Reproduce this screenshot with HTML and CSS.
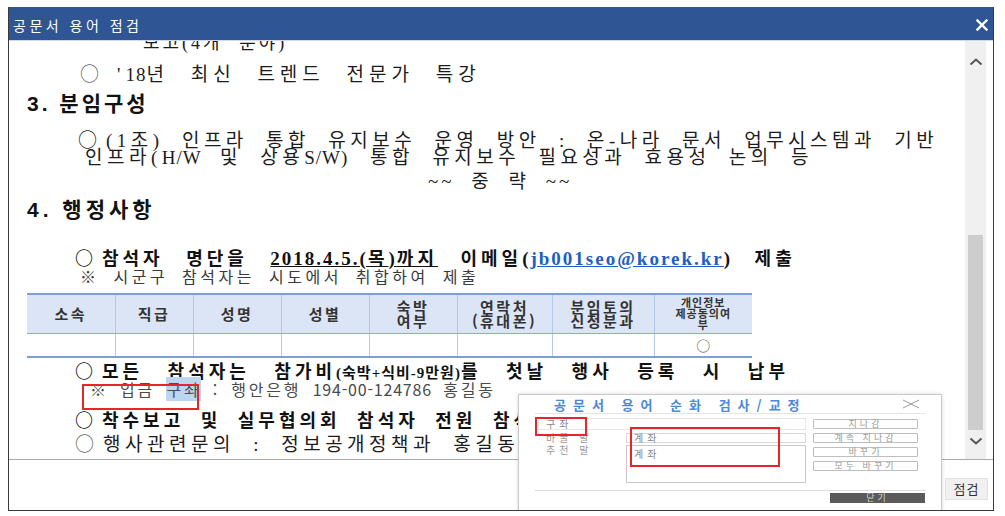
FILE: index.html
```html
<!DOCTYPE html>
<html lang="ko">
<head>
<meta charset="utf-8">
<title>공문서 용어 점검</title>
<link rel="stylesheet" href="styles.css">
</head>
<body>
<div class="win">
  <div class="titlebar">
    <span class="title">공문서 용어 점검</span>
    <svg class="close" width="12" height="12" viewBox="0 0 12 12"><path d="M1.5 1.5L10.5 10.5M10.5 1.5L1.5 10.5" stroke="#fff" stroke-width="2.4" stroke-linecap="square"/></svg>
  </div>
  <div class="view">
    <div class="doc">
      <div class="ln sr l0">보고(4개 분야)</div>
      <div class="ln sr l1"><span class="c lt o1">○</span>'<span class="la">18</span>년 최신 트렌드 전문가 특강</div>
      <div class="ln h">3. 분임구성</div>
      <div class="ln sr p3"><span class="c o2">○</span>(1조) 인프라 통합 유지보수 운영 방안 : 온-나라 문서 업무시스템과 기반<br>인프라(<span class="la">H/W</span> 및 상용<span class="la">S/W</span>) 통합 유지보수 필요성과 효용성 논의 등</div>
      <div class="ln sr l5">~~ 중 략 ~~</div>
      <div class="ln h h4">4. 행정사항</div>
      <div class="ln sr b l7"><span class="c o2">○</span>참석자 명단을 <u><span class="la">2018.4.5.(</span>목<span class="la">)</span>까지</u> 이메일<span class="la">(<a class="mail">jb001seo@korek.kr</a>)</span> 제출</div>
      <div class="note l8">※ 시군구 참석자는 시도에서 취합하여 제출</div>
      <table class="tbl">
        <colgroup>
          <col class="w88"><col class="w78"><col class="w88"><col class="w88"><col class="w88"><col class="w95"><col class="w102"><col class="w98">
        </colgroup>
        <tr>
          <th>소속</th><th>직급</th><th>성명</th><th>성별</th><th>숙박<br>여부</th><th>연락처<br>(휴대폰)</th><th>분임토의<br>신청분과</th><th class="th-s">개인정보<br>제공동의여<br>부</th>
        </tr>
        <tr>
          <td></td><td></td><td></td><td></td><td></td><td></td><td></td><td class="o">○</td>
        </tr>
      </table>
      <div class="ln sr b l9"><span class="c o2">○</span>모든 참석자는 참가비<span class="sm">(숙박+식비-9만원)</span>를 첫날 행사 등록 시 납부</div>
      <div class="note l10">※ 입금 <span class="sel">구좌</span> : 행안은행 <span class="dg">194-00-124786</span> 홍길동<span class="redbox rb0"></span></div>
      <div class="ln sr b l11"><span class="c o2">○</span>착수보고 및 실무협의회 참석자 전원 참석</div>
      <div class="ln sr l12"><span class="c lt o2">○</span>행사관련문의 : 정보공개정책과 홍길동 주무관</div>
    </div>
    <div class="sb">
      <svg class="chev up" width="14" height="8" viewBox="0 0 14 8"><path d="M1.5 6.5L7 1.5L12.5 6.5" fill="none" stroke="#555" stroke-width="2"/></svg>
      <div class="thumb"></div>
      <svg class="chev down" width="14" height="8" viewBox="0 0 14 8"><path d="M1.5 1.5L7 6.5L12.5 1.5" fill="none" stroke="#555" stroke-width="2"/></svg>
    </div>
  </div>
  <div class="foot">
    <div class="btn">점검</div>
  </div>

  <div class="pop">
    <div class="pop-head">
      <span class="pop-title">공문서 용어 순화 검사/교정</span>
      <svg class="pop-x" width="18" height="10" viewBox="0 0 18 10"><path d="M1 1L17 9M17 1L1 9" stroke="#9a9a9a" stroke-width="1"/></svg>
    </div>
    <div class="pop-main">
      <div class="pop-left">
        <div class="fld f1">구좌</div>
        <div class="pop-grid">
          <div class="lbl">바꿀 말</div><div class="fld f2">계좌</div>
          <div class="lbl">추천 말</div><div class="fld list">계좌</div>
        </div>
      </div>
      <div class="pop-btns">
        <div class="pbtn">지나감</div>
        <div class="pbtn">계속 지나감</div>
        <div class="pbtn">바꾸기</div>
        <div class="pbtn">모두 바꾸기</div>
      </div>
    </div>
    <div class="pop-foot"><div class="closebtn">닫기</div></div>
    <div class="redbox rb1"></div>
    <div class="redbox rb2"></div>
  </div>
</div>
</body>
</html>
```

FILE: styles.css
```css
* { box-sizing: border-box; }
html, body { margin: 0; padding: 0; background: #fff; }
body { font-family: "Noto Sans CJK KR", "Noto Sans", sans-serif; }

.win {
  margin: 7px 0 0 8px;
  width: 986px;
  height: 504px;
  border: 1px solid #3a3a3a;
  border-top: 0;
  display: flex;
  flex-direction: column;
  overflow: hidden;
  position: relative;
  background: #fff;
}

.titlebar {
  height: 34px;
  flex: none;
  background: #2f5594;
  border-bottom: 1px solid #cfd9ea;
  display: flex;
  align-items: center;
  justify-content: space-between;
  padding: 0 5px 0 4px;
}
.title { color: #fff; font-size: 14px; letter-spacing: 3.5px; line-height: 1; padding-top: 2px; }
.close { display: block; margin-top: 2px; }

.view { height: 419px; flex: none; display: flex; border-bottom: 1px solid #a8a8a8; }
.doc { flex: 1; overflow: hidden; }

.sb { width: 21px; margin-right: 7px; background: #f0f0f0; display: flex; flex-direction: column; align-items: center; }
.chev { display: block; flex: none; }
.chev.up { margin-top: 17px; }
.thumb { width: 15px; height: 195px; margin-top: 169px; background: #cdcdcd; flex: none; }
.chev.down { margin-top: 7px; }

.ln { white-space: nowrap; }
.sr {
  font-family: "Liberation Serif", "Noto Sans CJK KR", serif;
  font-size: 19px;
  letter-spacing: 4.5px;
  word-spacing: 9px;
  color: #1c1c1c;
}
.la { letter-spacing: 1px; }
.c { font-family: "Noto Sans CJK KR", sans-serif; }
.lt { color: #666; }
.o1 { margin-right: 18px; letter-spacing: 0; }
.o2 { margin-right: 9px; letter-spacing: 0; }

.l0 { margin-top: -10px; height: 24px; line-height: 24px; padding-left: 134px; font-size: 18px; letter-spacing: 3px; }
.l1 { height: 30px; line-height: 30px; padding-left: 71px; margin-top: 3px; letter-spacing: 5px; word-spacing: 12px; }
.h {
  font-family: "Liberation Sans", "Noto Sans CJK KR", sans-serif;
  font-weight: 700;
  font-size: 21px;
  letter-spacing: 3px;
  height: 32px;
  line-height: 32px;
  padding-left: 18px;
  color: #111;
}
.h4 { letter-spacing: 4px; }
.p3 { margin-top: 10px; line-height: 17px; height: 34px; padding-left: 76px; text-indent: -7px; }
.l5 { margin-top: 6px; height: 24px; line-height: 24px; padding-left: 419px; letter-spacing: 3px; }

.b { font-weight: 700; color: #111; font-size: 18px; letter-spacing: 4px; word-spacing: 8px; }
.l7 { margin-top: 19px; height: 24px; line-height: 24px; padding-left: 66px; word-spacing: 14px; }
.l7 .la { font-size: 19px; letter-spacing: 2px; }
.mail { color: #1f5fc4; text-decoration: underline; }

.note {
  font-family: "Noto Sans CJK KR", sans-serif;
  font-size: 16px;
  letter-spacing: 3.5px;
  word-spacing: 6px;
  color: #3a3a3a;
  white-space: nowrap;
}
.l8 { height: 15px; line-height: 15px; padding-left: 71px; }

.tbl {
  margin: 9px 0 0 18px;
  border-collapse: collapse;
  table-layout: fixed;
  width: 725px;
  border-top: 2px solid #7d9ed6;
  border-bottom: 2px solid #7d9ed6;
}
.w88 { width: 88px; }
.w78 { width: 78px; }
.w95 { width: 95px; }
.w102 { width: 102px; }
.w98 { width: 98px; }
.tbl th {
  background: #dbe5f5;
  height: 39px;
  border-bottom: 1px solid #8eaadb;
  font-family: "Noto Sans CJK KR", sans-serif;
  font-weight: 700;
  font-size: 15px;
  line-height: 14px;
  letter-spacing: 2.5px;
  color: #333;
  padding: 0;
  text-align: center;
}
.tbl th.th-s { font-size: 11px; line-height: 11px; letter-spacing: 1px; }
.tbl td { height: 24px; padding: 0; text-align: center; }
.tbl th + th, .tbl td + td { border-left: 1px solid #b6c8e8; }
.tbl td.o { font-family: "Noto Sans CJK KR", sans-serif; font-size: 14px; color: #555; }

.l9 { height: 24px; line-height: 24px; padding-left: 66px; word-spacing: 16px; }
.sm { font-size: 15px; letter-spacing: 1px; }
.l10 { height: 14px; line-height: 14px; padding-left: 81px; letter-spacing: 2.8px; word-spacing: 4px; color: #4a4a4a; position: relative; }
.dg { letter-spacing: 0.8px; }
.sel { background: #bcd6f2; }
.redbox { position: absolute; border: 2px solid #e2262b; }
.rb0 { left: 73px; top: 2px; width: 117px; height: 26px; }
.l11 { margin-top: 10px; height: 26px; line-height: 26px; padding-left: 66px; }
.l12 { height: 22px; line-height: 22px; padding-left: 66px; }

.foot { flex: 1; display: flex; justify-content: flex-end; align-items: flex-start; padding: 18px 5px 0 0; }
.btn {
  width: 43px;
  height: 22px;
  background: #f0f0f0;
  border: 1px solid #e2e2e2;
  font-size: 13px;
  line-height: 20px;
  text-align: center;
  letter-spacing: 1px;
  color: #333;
}

.pop {
  position: absolute;
  left: 509px;
  top: 387px;
  width: 424px;
  height: 130px;
  border: 1px solid #c9c9c9;
  background: #fff;
  padding: 0 16px;
  box-shadow: 0 0 4px rgba(0,0,0,0.15);
  font-family: "Noto Sans CJK KR", sans-serif;
}
.pop-head {
  height: 19px;
  border-bottom: 1px solid #e4e4e4;
  display: flex;
  align-items: center;
  justify-content: space-between;
  padding: 0 5px 0 19px;
}
.pop-title { font-size: 13px; font-weight: 700; color: #4a88d8; letter-spacing: 7px; line-height: 1; }
.pop-x { display: block; }
.pop-main { display: flex; margin-top: 4px; height: 65px; padding-left: 3px; gap: 7px; }
.pop-left { width: 268px; }
.fld { border: 1px solid #d8d8d8; font-size: 10px; color: #888; letter-spacing: 4px; padding-left: 7px; }
.f1 { height: 12px; line-height: 10px; border-color: #e6e6e6; }
.pop-grid { display: grid; grid-template-columns: 88px 180px; grid-template-rows: 10px 38px; row-gap: 2px; margin-top: 3px; }
.lbl { font-size: 10px; color: #999; letter-spacing: 4px; padding-left: 8px; line-height: 10px; }
.f2 { line-height: 8px; }
.list { line-height: 14px; padding-top: 1px; border-color: #c8c8c8; }
.pop-btns { width: 105px; display: flex; flex-direction: column; gap: 4px; padding-top: 1px; }
.pbtn { height: 10px; border: 1px solid #bdbdbd; border-radius: 1px; font-size: 9px; line-height: 8px; text-align: center; color: #999; letter-spacing: 3px; }
.pop-foot { margin-top: 7px; border-top: 1px solid #dcdcdc; display: flex; justify-content: flex-end; padding-top: 2px; }
.closebtn { width: 95px; height: 10px; background: #5a5a5a; color: #cfcfcf; font-size: 9px; line-height: 10px; text-align: center; letter-spacing: 3px; }
.rb1 { left: 16px; top: 22px; width: 52px; height: 19px; }
.rb2 { left: 111px; top: 32px; width: 150px; height: 40px; }
```
